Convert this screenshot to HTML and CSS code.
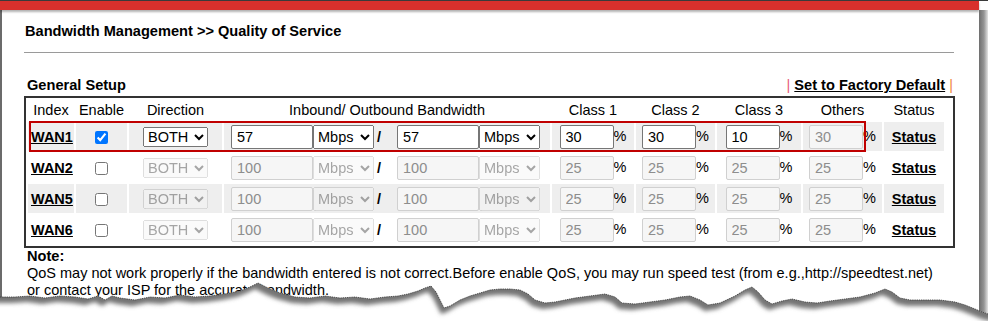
FILE: index.html
```html
<!DOCTYPE html>
<html lang="en">
<head>
    <meta charset="UTF-8">
    <title>Bandwidth Management - Quality of Service</title>
    <link rel="stylesheet" href="styles.css">
</head>
<body>
    <div class="frame">
        <div class="paper">
            <div class="topbar"></div>
            <div class="content">
                <h1 class="title">Bandwidth Management &gt;&gt; Quality of Service</h1>
                <hr class="rule">

                <div class="setup-head">
                    <span>General Setup</span>
                    <span class="factory"><span class="pipe pipe-left">|</span> <a href="#">Set to Factory Default</a> <span class="pipe pipe-right">|</span></span>
                </div>

                <div class="table-box">
                    <table class="qos">
                        <colgroup>
                            <col class="c-index"><col class="c-enable"><col class="c-dir"><col class="c-bw">
                            <col class="c-cls1"><col class="c-cls2"><col class="c-cls3"><col class="c-oth"><col class="c-status">
                        </colgroup>
                        <tr class="head">
                            <th>Index</th>
                            <th>Enable</th>
                            <th>Direction</th>
                            <th>Inbound/ Outbound Bandwidth</th>
                            <th>Class 1</th>
                            <th>Class 2</th>
                            <th>Class 3</th>
                            <th>Others</th>
                            <th>Status</th>
                        </tr>
                        <tr class="shade">
                            <td class="idx"><a href="#">WAN1</a></td>
                            <td class="mid"><input type="checkbox" checked></td>
                            <td class="mid"><select class="dir"><option>BOTH</option></select></td>
                            <td class="bw"><input class="txt bw-in" type="text" value="57"><select class="unit"><option>Mbps</option></select><span class="slash">/</span><input class="txt bw-in" type="text" value="57"><select class="unit"><option>Mbps</option></select></td>
                            <td class="mid"><input class="txt pct" type="text" value="30">%</td>
                            <td class="mid"><input class="txt pct" type="text" value="30">%</td>
                            <td class="mid"><input class="txt pct" type="text" value="10">%</td>
                            <td class="mid"><input class="txt pct" type="text" value="30" disabled>%</td>
                            <td class="mid"><a href="#">Status</a></td>
                        </tr>
                        <tr>
                            <td class="idx"><a href="#">WAN2</a></td>
                            <td class="mid"><input type="checkbox"></td>
                            <td class="mid"><select class="dir" disabled><option>BOTH</option></select></td>
                            <td class="bw"><input class="txt bw-in" type="text" value="100" disabled><select class="unit" disabled><option>Mbps</option></select><span class="slash">/</span><input class="txt bw-in" type="text" value="100" disabled><select class="unit" disabled><option>Mbps</option></select></td>
                            <td class="mid"><input class="txt pct" type="text" value="25" disabled>%</td>
                            <td class="mid"><input class="txt pct" type="text" value="25" disabled>%</td>
                            <td class="mid"><input class="txt pct" type="text" value="25" disabled>%</td>
                            <td class="mid"><input class="txt pct" type="text" value="25" disabled>%</td>
                            <td class="mid"><a href="#">Status</a></td>
                        </tr>
                        <tr class="shade">
                            <td class="idx"><a href="#">WAN5</a></td>
                            <td class="mid"><input type="checkbox"></td>
                            <td class="mid"><select class="dir" disabled><option>BOTH</option></select></td>
                            <td class="bw"><input class="txt bw-in" type="text" value="100" disabled><select class="unit" disabled><option>Mbps</option></select><span class="slash">/</span><input class="txt bw-in" type="text" value="100" disabled><select class="unit" disabled><option>Mbps</option></select></td>
                            <td class="mid"><input class="txt pct" type="text" value="25" disabled>%</td>
                            <td class="mid"><input class="txt pct" type="text" value="25" disabled>%</td>
                            <td class="mid"><input class="txt pct" type="text" value="25" disabled>%</td>
                            <td class="mid"><input class="txt pct" type="text" value="25" disabled>%</td>
                            <td class="mid"><a href="#">Status</a></td>
                        </tr>
                        <tr>
                            <td class="idx"><a href="#">WAN6</a></td>
                            <td class="mid"><input type="checkbox"></td>
                            <td class="mid"><select class="dir" disabled><option>BOTH</option></select></td>
                            <td class="bw"><input class="txt bw-in" type="text" value="100" disabled><select class="unit" disabled><option>Mbps</option></select><span class="slash">/</span><input class="txt bw-in" type="text" value="100" disabled><select class="unit" disabled><option>Mbps</option></select></td>
                            <td class="mid"><input class="txt pct" type="text" value="25" disabled>%</td>
                            <td class="mid"><input class="txt pct" type="text" value="25" disabled>%</td>
                            <td class="mid"><input class="txt pct" type="text" value="25" disabled>%</td>
                            <td class="mid"><input class="txt pct" type="text" value="25" disabled>%</td>
                            <td class="mid"><a href="#">Status</a></td>
                        </tr>
                    </table>
                    <!-- annotation around the WAN1 row -->
                    <div class="highlight"></div>
                </div>

                <div class="note">
                    <b>Note:</b><br>
                    QoS may not work properly if the bandwidth entered is not correct.Before enable QoS, you may run speed test (from e.g.,http://speedtest.net)<br>
                    or contact your ISP for the accurate bandwidth.
                </div>
            </div>
        </div>
        <div class="side-shadow"></div>

        <!-- torn paper edge -->
        <svg class="torn" width="988" height="46" viewBox="0 275 988 46">
            <defs>
                <clipPath id="below">
                    <path d="M0,297 L15,297 L30,296 L45,298 L60,296 L75,297 L88,299 L98,296 L105,300 L112,296 L120,298 L135,300 L150,297 L165,298 L180,295 L195,297 L210,296 L225,294 L240,291 L250,287 L258,283 L264,286 L270,289 L280,293 L295,297 L310,298 L325,296 L340,298 L355,297 L370,299 L385,297 L398,296 L408,294 L418,291 L425,288 L431,286 L436,292 L440,300 L444,308 L450,306 L460,300 L470,296 L480,293 L490,290 L500,289 L510,289 L520,290 L528,294 L535,300 L545,303 L555,302 L565,300 L575,298 L590,296 L605,294 L615,297 L622,303 L635,304 L650,302 L665,300 L680,297 L690,296 L700,300 L708,305 L720,303 L735,296 L745,290 L752,287 L758,292 L765,300 L772,304 L782,301 L792,299 L805,302 L817,303 L830,301 L845,299 L860,297 L875,293 L885,289 L892,292 L900,298 L910,300 L925,300 L940,300 L955,302 L965,305 L975,309 L982,312 L988,314 L988,321 L0,321 Z"/>
                </clipPath>
                <filter id="soft" filterUnits="userSpaceOnUse" x="-20" y="260" width="1030" height="80">
                    <feGaussianBlur stdDeviation="2.2"/>
                </filter>
            </defs>
            <path fill="#fff" d="M0,297 L15,297 L30,296 L45,298 L60,296 L75,297 L88,299 L98,296 L105,300 L112,296 L120,298 L135,300 L150,297 L165,298 L180,295 L195,297 L210,296 L225,294 L240,291 L250,287 L258,283 L264,286 L270,289 L280,293 L295,297 L310,298 L325,296 L340,298 L355,297 L370,299 L385,297 L398,296 L408,294 L418,291 L425,288 L431,286 L436,292 L440,300 L444,308 L450,306 L460,300 L470,296 L480,293 L490,290 L500,289 L510,289 L520,290 L528,294 L535,300 L545,303 L555,302 L565,300 L575,298 L590,296 L605,294 L615,297 L622,303 L635,304 L650,302 L665,300 L680,297 L690,296 L700,300 L708,305 L720,303 L735,296 L745,290 L752,287 L758,292 L765,300 L772,304 L782,301 L792,299 L805,302 L817,303 L830,301 L845,299 L860,297 L875,293 L885,289 L892,292 L900,298 L910,300 L925,300 L940,300 L955,302 L965,305 L975,309 L982,312 L988,314 L988,321 L0,321 Z"/>
            <g clip-path="url(#below)">
                <path fill="#747474" filter="url(#soft)" transform="translate(-3,6)" d="M-10,260 L-10,297 L0,297 L15,297 L30,296 L45,298 L60,296 L75,297 L88,299 L98,296 L105,300 L112,296 L120,298 L135,300 L150,297 L165,298 L180,295 L195,297 L210,296 L225,294 L240,291 L250,287 L258,283 L264,286 L270,289 L280,293 L295,297 L310,298 L325,296 L340,298 L355,297 L370,299 L385,297 L398,296 L408,294 L418,291 L425,288 L431,286 L436,292 L440,300 L444,308 L450,306 L460,300 L470,296 L480,293 L490,290 L500,289 L510,289 L520,290 L528,294 L535,300 L545,303 L555,302 L565,300 L575,298 L590,296 L605,294 L615,297 L622,303 L635,304 L650,302 L665,300 L680,297 L690,296 L700,300 L708,305 L720,303 L735,296 L745,290 L752,287 L758,292 L765,300 L772,304 L782,301 L792,299 L805,302 L817,303 L830,301 L845,299 L860,297 L875,293 L885,289 L892,292 L900,298 L910,300 L925,300 L940,300 L955,302 L965,305 L975,309 L982,312 L988,314 L1000,316 L1000,260 Z"/>
            </g>
            <polyline fill="none" stroke="#3a3a3a" stroke-width="0.8" stroke-dasharray="1.4 0.8" points="0,297 15,297 30,296 45,298 60,296 75,297 88,299 98,296 105,300 112,296 120,298 135,300 150,297 165,298 180,295 195,297 210,296 225,294 240,291 250,287 258,283 264,286 270,289 280,293 295,297 310,298 325,296 340,298 355,297 370,299 385,297 398,296 408,294 418,291 425,288 431,286 436,292 440,300 444,308 450,306 460,300 470,296 480,293 490,290 500,289 510,289 520,290 528,294 535,300 545,303 555,302 565,300 575,298 590,296 605,294 615,297 622,303 635,304 650,302 665,300 680,297 690,296 700,300 708,305 720,303 735,296 745,290 752,287 758,292 765,300 772,304 782,301 792,299 805,302 817,303 830,301 845,299 860,297 875,293 885,289 892,292 900,298 910,300 925,300 940,300 955,302 965,305 975,309 982,312 988,314"/>
        </svg>
    </div>
</body>
</html>
```

FILE: styles.css
```css
body {
    margin: 0;
    background: #fff;
    font-family: "Liberation Sans", Arial, sans-serif;
    font-size: 14.5px;
    color: #000;
}
.frame {
    position: relative;
    width: 988px;
    height: 321px;
    overflow: hidden;
    display: flex;
    border-top: 1px solid #3a3a3a;
    box-sizing: border-box;
}
.paper {
    width: 979px;
    border-left: 2px solid #6b6b6b;
    box-sizing: border-box;
}
.topbar {
    height: 9px;
    margin-left: -2px;
    background: #d8302c;
    box-shadow: 0 2px 2px rgba(0,0,0,0.3);
}
.side-shadow {
    width: 9px;
    margin-top: 9px;
    background: linear-gradient(to right, #6e6e6e, #959595 55%, #e4e4e4);
}
.content {
    padding: 13px 24px 0 22px;
}
.title {
    margin: 0 0 0 1px;
    font-size: 14.6px;
    font-weight: bold;
    line-height: 17px;
}
.rule {
    border: 0;
    border-top: 1px solid #9a9a9a;
    margin: 12px 1px 0 0;
}
.setup-head {
    display: flex;
    justify-content: space-between;
    margin-top: 24px;
    padding: 0 2px 0 3px;
    font-size: 14.6px;
    font-weight: bold;
    line-height: 17px;
}
.pipe {
    font-weight: normal;
}
.pipe-left {
    color: #e8607a;
}
.pipe-right {
    color: #f08a3c;
}
a {
    color: #000;
    font-weight: bold;
    text-decoration: underline;
}
.table-box {
    position: relative;
    border: 2px solid #333;
    padding-right: 9px;
    margin-top: 2px;
}
.qos {
    table-layout: fixed;
    width: 920px;
    border-collapse: separate;
    border-spacing: 2px;
}
.c-index { width: 46px; }
.c-enable { width: 51px; }
.c-dir { width: 93px; }
.c-bw { width: 326px; }
.c-cls1 { width: 82px; }
.c-cls2 { width: 79px; }
.c-cls3 { width: 84px; }
.c-oth { width: 79px; }
.c-status { width: 60px; }
.qos th {
    height: 20px;
    padding: 0;
    font-weight: normal;
    text-align: center;
    white-space: nowrap;
}
.qos td {
    height: 29px;
    padding: 0;
    white-space: nowrap;
    vertical-align: middle;
}
.shade td {
    background: #eeeeee;
}
.idx {
    padding-left: 3px !important;
}
.mid {
    text-align: center;
}
.bw {
    padding-left: 7px !important;
}
input, select {
    font-family: inherit;
    font-size: 14.5px;
    vertical-align: middle;
    margin: 0;
}
input[type="checkbox"] {
    width: 13px;
    height: 13px;
}
.txt {
    height: 24px;
    box-sizing: border-box;
    border: 1px solid #767676;
    border-radius: 2px;
    padding: 0 5px;
    background: #fff;
    color: #000;
}
.txt:disabled {
    background: #f6f6f6;
    border-color: #d0d0d0;
    color: #8d8d8d;
}
.bw-in {
    width: 82px;
}
.pct {
    width: 54px;
}
.dir {
    width: 65px;
    height: 20px;
}
.unit {
    width: 61px;
    height: 24px;
}
.slash {
    display: inline-block;
    margin: 0 16px 0 3px;
    font-weight: bold;
    vertical-align: middle;
}
.highlight {
    position: absolute;
    left: 3px;
    top: 23px;
    width: 837px;
    height: 31px;
    box-sizing: border-box;
    border: 2px solid #c00000;
}
.note {
    padding-left: 3px;
    line-height: 17px;
}
.note b {
    font-size: 14.6px;
}
.torn {
    position: absolute;
    left: 0;
    top: 274px;
}
```
